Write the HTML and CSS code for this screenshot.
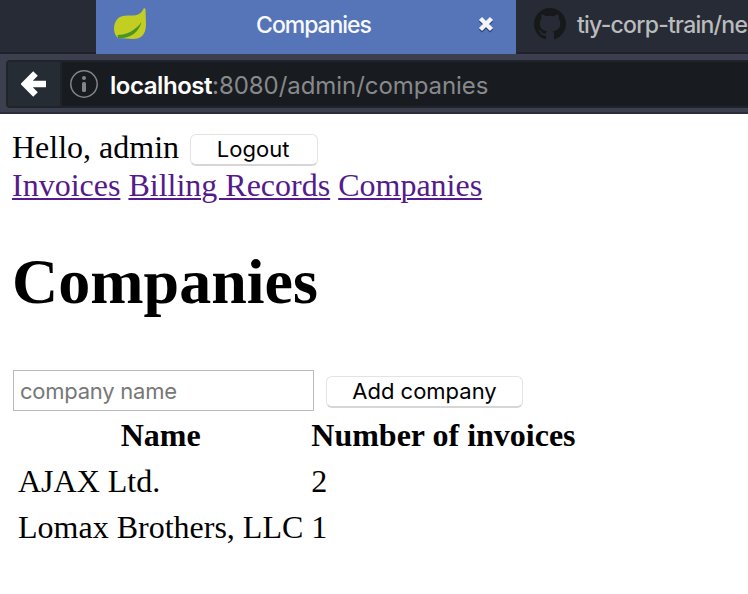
FILE: index.html
```html
<!DOCTYPE html>
<html lang="en">
<head>
<meta charset="utf-8">
<title>Companies</title>
<link rel="stylesheet" href="styles.css">
</head>
<body>
<header class="browser">
  <div class="tabs">
    <div class="tab-gap"></div>
    <div class="tab active">
      <svg class="leaf" width="34" height="34" viewBox="0 0 34 34"><path d="M31 1L32.500 2L33 18C32.500 28 28 32 20 32L5 31C1 28 0 21 2 16C5 9 9 8.500 18 8.500C25 8.500 28 7 31 1Z" fill="#c2ce22"/><path d="M4.500 28C13 28 22 24 28.500 15C26 25 18 30 10 31L5 31Z" fill="#4c9424"/></svg>
      <span class="tab-title">Companies</span>
      <svg class="close" width="16" height="18" viewBox="0 0 16 18"><path d="M2.500 4L13.500 15M13.500 4L2.500 15" stroke="#263d70" stroke-width="4.400"/><path d="M2.500 2.500L13.500 13.500M13.500 2.500L2.500 13.500" stroke="#f2f4f8" stroke-width="4.400"/></svg>
    </div>
    <div class="tab idle">
      <svg class="github" width="32" height="32" viewBox="0 0 16 16"><path fill="#171819" fill-rule="evenodd" d="M8 0C3.580 0 0 3.580 0 8c0 3.540 2.290 6.530 5.470 7.590.4.070.55-.17.55-.38 0-.19-.01-.82-.01-1.490-2.010.37-2.530-.49-2.690-.94-.09-.23-.48-.94-.82-1.130-.28-.15-.68-.52-.01-.53.63-.01 1.080.58 1.230.82.72 1.210 1.870.87 2.330.66.070-.52.28-.87.51-1.070-1.780-.2-3.640-.89-3.640-3.950 0-.87.31-1.590.82-2.150-.08-.2-.36-1.020.08-2.120 0 0 .67-.21 2.200.82.64-.18 1.320-.27 2-.27s1.360.09 2 .27c1.530-1.040 2.200-.82 2.200-.82.44 1.100.16 1.920.08 2.120.51.56.82 1.270.82 2.150 0 3.070-1.870 3.750-3.650 3.950.29.25.54.73.54 1.480 0 1.070-.01 1.930-.01 2.200 0 .21.15.46.55.38A8.010 8.010 0 0 0 16 8c0-4.420-3.580-8-8-8z"/></svg>
      <span class="idle-title">tiy-corp-train/ne</span>
    </div>
  </div>
  <div class="toolbar">
    <div class="address">
      <div class="back"><svg width="26" height="28" viewBox="0 0 26 28"><path d="M14.500 3.500L4 14L14.500 24.500M5 14H25" fill="none" stroke="#fff" stroke-width="6.500"/></svg></div>
      <svg class="info" width="28" height="28" viewBox="0 0 28 28"><circle cx="14" cy="14" r="13.200" fill="none" stroke="#838587" stroke-width="1.500"/><circle cx="14" cy="8" r="2" fill="#838587"/><rect x="12" y="12" width="4" height="10" rx="1.500" fill="#838587"/></svg>
      <span class="url"><b>localhost</b>:8080/admin/companies</span>
    </div>
  </div>
</header>
<main>
  <div class="hello"><span>Hello, admin</span><button class="logout"><span>Logout</span></button></div>
  <nav><a href="#">Invoices</a> <a href="#">Billing Records</a> <a href="#">Companies</a></nav>
  <h1>Companies</h1>
  <form><input type="text" placeholder="company name"><button class="add" type="button"><span>Add company</span></button></form>
  <table>
    <tr><th>Name</th><th>Number of invoices</th></tr>
    <tr><td>AJAX Ltd.</td><td>2</td></tr>
    <tr><td>Lomax Brothers, LLC</td><td>1</td></tr>
  </table>
</main>
</body>
</html>
```
FILE: styles.css
```css
* { box-sizing: border-box; }
body {
  margin: 0;
  background: #fff;
  color: #000;
  font: 32px/37px "Liberation Serif", serif;
  overflow: hidden;
}
svg { display: block; flex: none; }
.browser { font-family: Inter, sans-serif; white-space: nowrap; }
.tabs { display: flex; height: 54px; background: #272b35; overflow: hidden; }
.tab-gap, .idle { border-bottom: 2px solid #1f222b; }
.tab-gap { width: 96px; flex: none; }
.tab { display: flex; flex: none; }
.active { width: 420px; background: #5675b9; padding: 7px 22px 0 17px; }
.tab-title { flex: 1; padding-left: 2px; text-align: center; color: #f8f9fc; font-size: 23px; font-weight: 500; line-height: 37px; letter-spacing: -1.050px; }
.close { margin-top: 9px; }
.idle { width: 232px; padding: 8px 0 0 18px; color: #b9bbbd; font-size: 23px; font-weight: 500; line-height: 35px; }
.idle-title { margin-left: 11px; letter-spacing: -0.750px; }
.toolbar { height: 60px; padding: 6px 0 4px 6px; background: #3c3f4e; border-bottom: 2px solid #2b2d38; }
.address { display: flex; align-items: center; height: 48px; background: #181b1f; border: 2px solid #1f242a; border-right: 0; border-radius: 4px 0 0 4px; }
.back { display: flex; align-items: center; width: 54px; height: 44px; padding-left: 13px; background: #262c34; border-right: 2px solid #1d2228; }
.info { margin-left: 8px; }
.url { margin-left: 12px; padding-top: 3px; color: #87898b; font-size: 24px; line-height: 41px; letter-spacing: -0.060px; }
.url b { color: #fff; font-weight: 600; letter-spacing: -0.450px; }
main { padding: 14px 12px 0; }
.hello { display: flex; height: 39px; line-height: 38px; }
button {
  height: 32px;
  padding: 0 0 2px;
  background: #fff;
  border: 1px solid #e3e3e3;
  border-bottom: 2px solid #d6d6d6;
  border-radius: 6px;
  color: #000;
  font: 22px/26px Inter, sans-serif;
}
.logout { width: 128px; margin: 6px 0 0 11px; }
.logout span { margin-right: 2px; }
.add { width: 197px; margin: 6px 0 0 12px; }
nav { height: 37px; }
a { color: #551a8b; text-decoration-thickness: 2px; text-underline-offset: 2px; }
h1 { margin: 41px 0 51px; font-size: 64px; line-height: 74px; }
form { display: flex; height: 41px; padding-left: 1px; }
input { width: 301px; height: 41px; padding: 0 6px; border: 1px solid #bababa; border-radius: 0; font: 22px Inter, sans-serif; letter-spacing: -0.250px; }
input::placeholder { color: #777; opacity: 1; }
table { border-spacing: 4px; margin-top: -1px; }
th, td { height: 42px; padding: 2px; line-height: 37px; }
```
